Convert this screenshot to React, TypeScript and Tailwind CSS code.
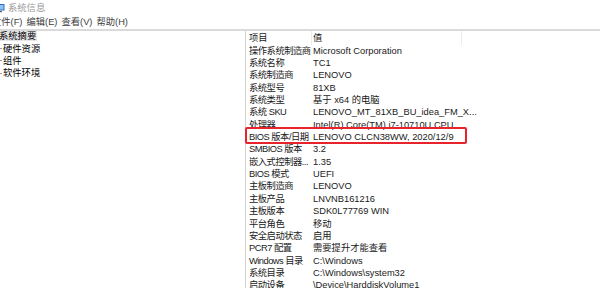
import React from "react";

const rows: [string, string][] = [
  ["操作系统制造商", "Microsoft Corporation"],
  ["系统名称", "TC1"],
  ["系统制造商", "LENOVO"],
  ["系统型号", "81XB"],
  ["系统类型", "基于 x64 的电脑"],
  ["系统 SKU", "LENOVO_MT_81XB_BU_idea_FM_X..."],
  ["处理器", "Intel(R) Core(TM) i7-10710U CPU ..."],
  ["BIOS 版本/日期", "LENOVO CLCN38WW, 2020/12/9"],
  ["SMBIOS 版本", "3.2"],
  ["嵌入式控制器...", "1.35"],
  ["BIOS 模式", "UEFI"],
  ["主板制造商", "LENOVO"],
  ["主板产品", "LNVNB161216"],
  ["主板版本", "SDK0L77769 WIN"],
  ["平台角色", "移动"],
  ["安全启动状态", "启用"],
  ["PCR7 配置", "需要提升才能查看"],
  ["Windows 目录", "C:\\Windows"],
  ["系统目录", "C:\\Windows\\system32"],
  ["启动设备", "\\Device\\HarddiskVolume1"],
];

function AppIcon() {
  return (
    <svg width="10" height="10" viewBox="0 0 10 10" className="-ml-[5px] shrink-0">
      <rect x="0.5" y="1" width="9" height="6.5" rx="0.5" fill="#2d6fc9" />
      <rect x="1.5" y="2" width="7" height="4.5" fill="#8fc3f2" />
      <rect x="3" y="8" width="4" height="1.2" fill="#5a5a5a" />
    </svg>
  );
}

export default function App() {
  return (
    <div className="relative h-[288px] w-[600px] overflow-hidden bg-white text-[9.3px] leading-[12px] text-[#1a1a1a]" style={{ fontFamily: '"Liberation Sans", "Noto Sans CJK SC", sans-serif' }}>
      <div className="flex h-[15px] items-center gap-[3px]">
        <AppIcon />
        <span className="text-[#9a9a9a]">系统信息</span>
      </div>
      <div className="-ml-[8px] flex h-[14px] items-center gap-[4px] text-[#3c3c3c]">
        <span>文件(F)</span>
        <span>编辑(E)</span>
        <span>查看(V)</span>
        <span>帮助(H)</span>
      </div>
      <div className="h-[2px] bg-[#dadada]" />
      <div className="flex">
        <div className="w-[245px] shrink-0 -mt-px">
          <div className="flex h-[12.4px] items-center">
            <span className="-ml-[2px] bg-[#e6e6e6] px-px leading-[10px] text-black">系统摘要</span>
          </div>
          {["硬件资源", "组件", "软件环境"].map((t) => (
            <div key={t} className="flex h-[12.4px] items-center text-black">
              <span className="mr-[1px] h-px w-[2px] bg-[#9a9a9a]" />
              {t}
            </div>
          ))}
        </div>
        <div className="relative flex-1 border-l border-[#d4d4d4] pt-[1px]">
          <div className="relative flex h-[12.37px] items-center">
            <span className="w-[67px] shrink-0 pl-[3px]">项目</span>
            <span>值</span>
            <span className="absolute left-[65px] top-[-1px] h-[14px] w-px bg-[#ececec]" />
            <span className="absolute left-[215px] top-[-1px] h-[14px] w-px bg-[#ececec]" />
          </div>
          {rows.map(([k, v]) => (
            <div key={k} className="flex h-[12.37px] items-center whitespace-nowrap">
              <span className="w-[67px] shrink-0 pl-[3px] tracking-[-0.5px]">{k}</span>
              <span>{v}</span>
            </div>
          ))}
          <div className="absolute left-[-1px] top-[96px] h-[17px] w-[222px] rounded-[2px] border-2 border-[#e8232b]" />
        </div>
      </div>
    </div>
  );
}
